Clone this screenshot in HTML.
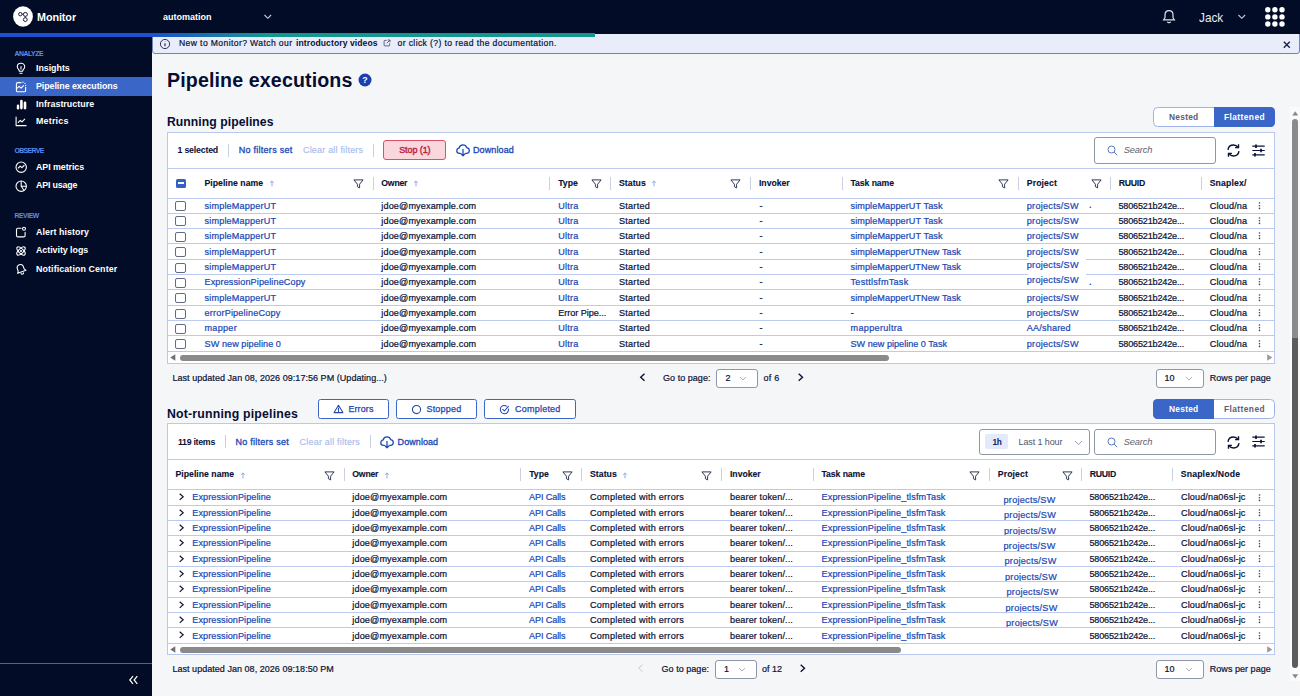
<!DOCTYPE html>
<html lang="en"><head><meta charset="utf-8"><title>Monitor - Pipeline executions</title>
<style>
*{box-sizing:border-box;margin:0;padding:0}
html,body{width:1300px;height:696px;overflow:hidden;background:#f5f6f8;font-family:"Liberation Sans",sans-serif;color:#0b1236}
.abs{position:absolute}
svg{overflow:visible}
.t{position:absolute;white-space:pre;line-height:1}
.panel{position:absolute;left:167px;width:1108px;background:#fff;border:1px solid #b9c8ef}
.ln{position:absolute;left:168px;width:1106px;height:1px;background:#bccaef}
.sep{position:absolute;width:1px;height:13px;background:#c9d0e4}
.cb{position:absolute;width:11px;height:10px;border:1.3px solid #636b82;border-radius:2px;background:#fff}
.btn{position:absolute;border:1px solid #3a66c8;border-radius:2.5px;background:#fff;height:19.5px}
.sel{position:absolute;border:1px solid #8f96aa;border-radius:3px;background:#fff}
</style></head>
<body>
<div class="abs" style="left:0;top:0;width:1300px;height:33.5px;background:#020c26"></div>
<div class="abs" style="left:0;top:33px;width:152px;height:663px;background:#020c26"></div>
<div class="abs" style="left:152px;top:31px;width:1147.5px;height:22.5px;background:#e8edf9;border:1px solid #6f83bd;border-radius:3px"></div>
<div class="abs" style="left:152px;top:30px;width:1148px;height:3.5px;background:#020c26"></div>
<div class="abs" style="left:0;top:33px;width:595px;height:3.6px;background:linear-gradient(90deg,#1b50d0 0,#1b50d0 155px,#12988f 265px,#12988f 595px)"></div>
<svg class="abs" style="left:12.5px;top:6px" width="20" height="21" viewBox="0 0 20 21"><ellipse cx="10" cy="10.5" rx="9.9" ry="10.3" fill="#fff"/><g fill="none" stroke="#1b2038" stroke-width="1"><circle cx="7.3" cy="8.2" r="1.7"/><circle cx="12.4" cy="8.4" r="2"/><circle cx="12.3" cy="13.6" r="1.9"/><path d="M9 8.200h1.400M12.400 10.400v1.300"/></g></svg>
<div class="t" id="f1" style="left:37px;top:11.5px;font-size:10.8px;font-weight:700;color:#fff;letter-spacing:-0.083px;">Monitor</div>
<div class="t" id="f2" style="left:163px;top:12.6px;font-size:9px;font-weight:700;color:#fff;letter-spacing:0.000px;">automation</div>
<svg class="abs" style="left:263px;top:14px" width="10" height="6" viewBox="0 0 10 6"><path d="M1.500 1l3.300 3.300L8.100 1" fill="none" stroke="#c9cede" stroke-width="1.1"/></svg>
<svg class="abs" style="left:1161.5px;top:8.700px" width="14" height="16" viewBox="0 0 14 16"><path d="M7 1.600c-2.5 0-4 1.9-4 4.300v2.800l-1.4 2.200h10.800l-1.4-2.200V5.900c0-2.4-1.5-4.3-4-4.300z" fill="none" stroke="#dfe2ec" stroke-width="1.2"/><path d="M5.400 12.700c.3.7.8 1 1.6 1s1.300-.3 1.6-1" fill="none" stroke="#dfe2ec" stroke-width="1.2"/></svg>
<div class="t" style="left:1199.4px;top:12.3px;font-size:12.8px;font-weight:400;color:#eceef4;transform:scaleX(.92);transform-origin:0 0">Jack</div>
<svg class="abs" style="left:1237px;top:14px" width="10" height="6" viewBox="0 0 10 6"><path d="M1.500 1l3.300 3.300L8.100 1" fill="none" stroke="#c9cede" stroke-width="1.1"/></svg>
<svg class="abs" style="left:1264.9px;top:6.600px" width="20" height="20" viewBox="0 0 20 20" fill="#fff"><circle cx="2.8" cy="2.8" r="2.7"/><circle cx="9.9" cy="2.8" r="2.7"/><circle cx="17" cy="2.8" r="2.7"/><circle cx="2.8" cy="9.9" r="2.7"/><circle cx="9.9" cy="9.9" r="2.7"/><circle cx="17" cy="9.9" r="2.7"/><circle cx="2.8" cy="17" r="2.7"/><circle cx="9.9" cy="17" r="2.7"/><circle cx="17" cy="17" r="2.7"/></svg>
<div class="t" id="f3" style="left:14.5px;top:50.5px;font-size:6.9px;font-weight:700;color:#5a8cf0;letter-spacing:-0.487px;">ANALYZE</div>
<div class="abs" style="left:0;top:77px;width:152px;height:18.5px;background:#3a66c8"></div>
<div class="t" id="f4" style="left:36px;top:64.3px;font-size:8.9px;font-weight:700;color:#fff;letter-spacing:-0.041px;">Insights</div>
<div class="t" id="f5" style="left:36px;top:82.1px;font-size:8.9px;font-weight:700;color:#fff;letter-spacing:-0.067px;">Pipeline executions</div>
<div class="t" id="f6" style="left:36px;top:99.89999999999999px;font-size:8.9px;font-weight:700;color:#fff;letter-spacing:0.035px;">Infrastructure</div>
<div class="t" id="f7" style="left:36px;top:117.0px;font-size:8.9px;font-weight:700;color:#fff;letter-spacing:0.217px;">Metrics</div>
<div class="t" id="f8" style="left:36px;top:163.0px;font-size:8.9px;font-weight:700;color:#fff;letter-spacing:-0.068px;">API metrics</div>
<div class="t" id="f9" style="left:36px;top:181.4px;font-size:8.9px;font-weight:700;color:#fff;letter-spacing:-0.169px;">API usage</div>
<div class="t" id="f10" style="left:36px;top:228.0px;font-size:8.9px;font-weight:700;color:#fff;letter-spacing:0.055px;">Alert history</div>
<div class="t" id="f11" style="left:36px;top:246.4px;font-size:8.9px;font-weight:700;color:#fff;letter-spacing:-0.045px;">Activity logs</div>
<div class="t" id="f12" style="left:36px;top:264.5px;font-size:8.9px;font-weight:700;color:#fff;letter-spacing:0.100px;">Notification Center</div>
<div class="t" id="f13" style="left:14.5px;top:148px;font-size:6.9px;font-weight:700;color:#5a8cf0;letter-spacing:-0.625px;">OBSERVE</div>
<div class="t" id="f14" style="left:14.5px;top:213.2px;font-size:6.9px;font-weight:700;color:#5a8cf0;letter-spacing:-0.481px;">REVIEW</div>
<svg class="abs" style="left:15.2px;top:62.2px" width="12" height="13" viewBox="0 0 12 13" fill="none" stroke="#fff" stroke-width="1.1" stroke-linecap="round" stroke-linejoin="round"><path d="M6 1.300c-2.2 0-3.7 1.6-3.7 3.5 0 1.3.7 2.1 1.4 2.9.4.5.7 1 .7 1.600h3.200c0-.6.3-1.1.7-1.6.7-.8 1.4-1.6 1.4-2.9 0-1.9-1.5-3.5-3.7-3.500z"/><path d="M4.900 11.300h2.200M6 4.500v2.600"/></svg>
<svg class="abs" style="left:14.8px;top:80.5px" width="12" height="12" viewBox="0 0 12 12" fill="none" stroke="#fff" stroke-width="1.1" stroke-linecap="round" stroke-linejoin="round"><path d="M6 1.600H2.800c-.8 0-1.4.6-1.4 1.400v6.400c0 .8.6 1.4 1.4 1.400h6.400c.8 0 1.4-.6 1.4-1.400V6.200"/><path d="M1.700 7.600l2.400-2.2 2 1.7 2.4-2.4"/><path d="M8 1.200v.1M10 2.300v.1M10.700 4.300v.1" stroke-width="1.2"/></svg>
<svg class="abs" style="left:15.8px;top:98.5px" width="12" height="11" viewBox="0 0 12 11" fill="#fff"><rect x="0.8" y="5.6" width="2.4" height="4.8" rx="1.2"/><rect x="4.1" y="0.8" width="2.6" height="9.6" rx="1.3"/><rect x="7.7" y="2.6" width="2.6" height="7.8" rx="1.3"/></svg>
<svg class="abs" style="left:15.1px;top:116px" width="12" height="11" viewBox="0 0 12 11" fill="none" stroke="#fff" stroke-width="1.1" stroke-linecap="round" stroke-linejoin="round"><path d="M1.100 1v8.600h10"/><path d="M3.300 6.400l2-2.1 1.7 1.5 2.7-2.6"/></svg>
<svg class="abs" style="left:15px;top:161.2px" width="13" height="13" viewBox="0 0 13 13" fill="none" stroke="#fff" stroke-width="1.1" stroke-linecap="round" stroke-linejoin="round"><circle cx="6.2" cy="6.2" r="5.2"/><path d="M3.300 7l1.900-1.9 1.7 1.5 2.2-2.1"/></svg>
<svg class="abs" style="left:15px;top:179.5px" width="13" height="13" viewBox="0 0 13 13" fill="none" stroke="#fff" stroke-width="1.1" stroke-linecap="round" stroke-linejoin="round"><circle cx="6.2" cy="6.2" r="5.2"/><path d="M6.200 1.300v4.900h4.900M6.200 6.200l2.700 4"/></svg>
<svg class="abs" style="left:14.7px;top:225.6px" width="12" height="12" viewBox="0 0 12 12" fill="none" stroke="#fff" stroke-width="1.1" stroke-linecap="round" stroke-linejoin="round"><path d="M6 2.300H2.900c-.8 0-1.4.6-1.4 1.400v5.800c0 .8.6 1.4 1.4 1.400h5.800c.8 0 1.4-.6 1.4-1.400V6.400"/><circle cx="9" cy="2.7" r="1.5"/></svg>
<svg class="abs" style="left:14.6px;top:244.8px" width="12" height="12" viewBox="0 0 12 12" fill="none" stroke="#fff" stroke-width="1.1" stroke-linecap="round" stroke-linejoin="round"><ellipse cx="6" cy="6" rx="5.3" ry="2.4" transform="rotate(45 6 6)"/><ellipse cx="6" cy="6" rx="5.3" ry="2.4" transform="rotate(-45 6 6)"/><circle cx="6" cy="6" r=".5" fill="#fff"/></svg>
<svg class="abs" style="left:14.7px;top:262.8px" width="12" height="13" viewBox="0 0 12 13" fill="none" stroke="#fff" stroke-width="1.1" stroke-linecap="round" stroke-linejoin="round"><g transform="rotate(-20 6 6.5)"><path d="M6 1.400c-2 0-3.2 1.4-3.2 3.200v2.400L1.600 9h8.800L9.200 7V4.600C9.200 2.8 8 1.4 6 1.400z"/><path d="M4.700 10.400c.2.7.7 1 1.3 1s1.100-.3 1.3-1"/></g></svg>
<div class="abs" style="left:0;top:663px;width:152px;height:1px;background:#5b6382"></div>
<svg class="abs" style="left:128px;top:675px" width="11" height="10" viewBox="0 0 11 10" ><path d="M5 1.200L1.800 5 5 8.800M9.300 1.200L6.100 5l3.200 3.8" fill="none" stroke="#fff" stroke-width="1.2"/></svg>
<svg class="abs" style="left:158.6px;top:38.4px" width="12" height="12" viewBox="0 0 12 12" ><circle cx="6" cy="6" r="4.6" fill="none" stroke="#1b2342" stroke-width=".9"/><path d="M6 5.300v3M6 3.500v.3" stroke="#1b2342" stroke-width="1.1"/></svg>
<div class="t" id="f15" style="left:179px;top:38.8px;font-size:8.6px;font-weight:400;color:#0b1236;-webkit-text-stroke:0.2px #0b1236;letter-spacing:0.384px;">New to Monitor? Watch our</div>
<div class="t" id="f16" style="left:296px;top:38.8px;font-size:8.6px;font-weight:700;color:#0b1236;letter-spacing:0.073px;">introductory videos</div>
<svg class="abs" style="left:383px;top:39.4px" width="8" height="8" viewBox="0 0 8 8" ><path d="M3.600 1.400H1.900c-.5 0-.8.3-.8.8v3.900c0 .5.3.8.8.8h3.900c.5 0 .8-.3.8-.8V4.400M4.700 1h2.300v2.300M6.800 1.200L3.800 4.2" fill="none" stroke="#3a4260" stroke-width=".8"/></svg>
<div class="t" id="f17" style="left:397.5px;top:38.8px;font-size:8.6px;font-weight:400;color:#0b1236;-webkit-text-stroke:0.2px #0b1236;letter-spacing:0.383px;">or click (?) to read the documentation.</div>
<svg class="abs" style="left:1283.2px;top:40.7px" width="8" height="8" viewBox="0 0 8 8" ><path d="M.8 .8l6 6M6.800 .8l-6 6" stroke="#141c48" stroke-width="1.3"/></svg>
<div class="t" id="f18" style="left:167px;top:70.7px;font-size:19.6px;font-weight:700;color:#060d33;letter-spacing:0.135px;">Pipeline executions</div>
<svg class="abs" style="left:358.3px;top:73.3px" width="14" height="14" viewBox="0 0 14 14"><circle cx="7" cy="7" r="6.5" fill="#1c3fae"/><text x="7" y="10.1" text-anchor="middle" font-family="Liberation Sans,sans-serif" font-weight="700" font-size="8.8" fill="#fff">?</text></svg>
<div class="t" id="f19" style="left:167px;top:116.3px;font-size:12.2px;font-weight:700;color:#060d33;letter-spacing:0.051px;">Running pipelines</div>
<div class="t" id="f20" style="left:167px;top:407.8px;font-size:12.3px;font-weight:700;color:#060d33;letter-spacing:0.188px;">Not-running pipelines</div>
<div class="panel" style="top:132px;height:231.5px"></div>
<div class="abs" style="left:1153px;top:107px;width:122px;height:19.5px;border:1px solid #9db3ea;border-radius:4.500px;background:#fff"></div>
<div class="abs" style="left:1213.5px;top:107px;width:61.500px;height:19.5px;border-radius:0 4.500px 4.500px 0;background:#3a66c8"></div>
<div class="t" id="f21" style="left:1169px;top:112.7px;font-size:8.4px;font-weight:700;color:#5a6072;letter-spacing:0.260px;">Nested</div>
<div class="t" id="f22" style="left:1224px;top:112.7px;font-size:8.4px;font-weight:700;color:#fff;letter-spacing:0.418px;">Flattened</div>
<div class="t" id="f23" style="left:177.5px;top:146.2px;font-size:8.8px;font-weight:700;color:#0b1236;letter-spacing:-0.205px;">1 selected</div>
<div class="sep" style="left:227.7px;top:143.7px"></div>
<div class="t" id="f24" style="left:238.7px;top:146.2px;font-size:9px;font-weight:400;color:#1a47b5;-webkit-text-stroke:0.3px #1a47b5;letter-spacing:0.270px;">No filters set</div>
<div class="t" id="f25" style="left:303px;top:146.2px;font-size:9px;font-weight:400;color:#a9bcec;-webkit-text-stroke:0.15px #a9bcec;letter-spacing:0.187px;">Clear all filters</div>
<div class="sep" style="left:372.7px;top:143.7px"></div>
<div class="abs" style="left:383px;top:140px;width:63px;height:20px;background:#f9d7dd;border:1.300px solid #d9506a;border-radius:3px"></div>
<div class="t" id="f26" style="left:399.2px;top:146.2px;font-size:9px;font-weight:400;color:#bb1f40;-webkit-text-stroke:0.4px #bb1f40;letter-spacing:-0.089px;">Stop (1)</div>
<svg class="abs" style="left:456.2px;top:144px" width="14" height="13" viewBox="0 0 14 13" ><path d="M4.300 9.300H3.500C2 9.3.8 8.2.8 6.700c0-1.4 1-2.5 2.3-2.700C3.500 2.2 5 .9 6.9.9c1.800 0 3.3 1.1 3.8 2.7 1.5.2 2.6 1.4 2.6 2.9 0 1.6-1.3 2.8-2.8 2.800h-.8" fill="none" stroke="#1a47b5" stroke-width="1.25" stroke-linecap="round"/><path d="M7 5.400v6.200M4.800 9.600L7 11.800l2.200-2.2" fill="none" stroke="#1a47b5" stroke-width="1.25" stroke-linecap="round" stroke-linejoin="round"/></svg>
<div class="t" id="f27" style="left:473px;top:146.2px;font-size:9px;font-weight:400;color:#1a47b5;-webkit-text-stroke:0.3px #1a47b5;letter-spacing:0.121px;">Download</div>
<div class="sel" style="left:1094px;top:137.2px;width:122px;height:26.5px;border-width:1.2px"></div>
<svg class="abs" style="left:1107px;top:145.2px" width="11" height="11" viewBox="0 0 11 11" ><circle cx="4.5" cy="4.5" r="3.5" fill="none" stroke="#5877b8" stroke-width="1"/><path d="M7 7l3.200 3.2" stroke="#5877b8" stroke-width="1"/></svg>
<div class="t" id="f28" style="left:1123.8px;top:146.0px;font-size:9.3px;font-weight:400;color:#5d6377;letter-spacing:-0.178px;font-style:italic">Search</div>
<svg class="abs" style="left:1226px;top:143px" width="15" height="15" viewBox="0 0 15 15" ><g fill="none" stroke="#0b1236" stroke-width="1.4"><path d="M2 6.800C2.400 4 4.7 2 7.5 2c1.900 0 3.5.9 4.5 2.300M13 8.200C12.600 11 10.3 13 7.5 13c-1.9 0-3.5-.9-4.5-2.3"/><path d="M12.500 1.200v3.400H9.100M2.500 13.800v-3.400h3.400"/></g></svg>
<svg class="abs" style="left:1251.5px;top:143.7px" width="13" height="13" viewBox="0 0 13 13" ><g fill="none" stroke="#0b1236" stroke-width="1.2"><path d="M.3 2.200h12.400M.3 6.500h12.400M.3 10.800h12.400"/><path d="M4 .4v3.600M9 4.700v3.600M3 9v3.600" stroke-width="1.7"/></g></svg>
<div class="ln" style="top:168px"></div>
<div class="ln" style="top:197.5px"></div>
<div class="abs" style="left:176px;top:178.5px;width:9.5px;height:9.2px;background:#3560c6;border-radius:1.5px"></div>
<div class="abs" style="left:178px;top:182.39999999999998px;width:5.5px;height:1.5px;background:#fff"></div>
<div class="t" id="f29" style="left:204.5px;top:178.7px;font-size:8.7px;font-weight:700;color:#0b1236;-webkit-text-stroke:0.12px #0b1236;letter-spacing:0.014px;">Pipeline name</div>
<svg class="abs" style="left:353.0px;top:179.0px" width="11" height="10" viewBox="0 0 11 10" ><path d="M.9 .9h9.200L6.600 5.200v3.700L4.400 7.700V5.200z" fill="none" stroke="#1b2342" stroke-width=".9" stroke-linejoin="round"/></svg>
<div class="sep" style="left:372.8px;top:176.7px"></div>
<div class="t" id="f30" style="left:381.3px;top:178.7px;font-size:8.7px;font-weight:700;color:#0b1236;-webkit-text-stroke:0.12px #0b1236;letter-spacing:-0.209px;">Owner</div>
<div class="sep" style="left:549.1999999999999px;top:176.7px"></div>
<div class="t" id="f31" style="left:558.2px;top:178.7px;font-size:8.7px;font-weight:700;color:#0b1236;-webkit-text-stroke:0.12px #0b1236;letter-spacing:0.015px;">Type</div>
<svg class="abs" style="left:590.6px;top:179.0px" width="11" height="10" viewBox="0 0 11 10" ><path d="M.9 .9h9.200L6.600 5.200v3.700L4.400 7.700V5.200z" fill="none" stroke="#1b2342" stroke-width=".9" stroke-linejoin="round"/></svg>
<div class="sep" style="left:610.0999999999999px;top:176.7px"></div>
<div class="t" id="f32" style="left:619px;top:178.7px;font-size:8.7px;font-weight:700;color:#0b1236;-webkit-text-stroke:0.12px #0b1236;letter-spacing:0.040px;">Status</div>
<svg class="abs" style="left:730.2px;top:179.0px" width="11" height="10" viewBox="0 0 11 10" ><path d="M.9 .9h9.200L6.600 5.200v3.700L4.400 7.700V5.200z" fill="none" stroke="#1b2342" stroke-width=".9" stroke-linejoin="round"/></svg>
<div class="sep" style="left:750.0px;top:176.7px"></div>
<div class="t" id="f33" style="left:759px;top:178.7px;font-size:8.7px;font-weight:700;color:#0b1236;-webkit-text-stroke:0.12px #0b1236;letter-spacing:-0.044px;">Invoker</div>
<div class="sep" style="left:841.5px;top:176.7px"></div>
<div class="t" id="f34" style="left:850.5px;top:178.7px;font-size:8.7px;font-weight:700;color:#0b1236;-webkit-text-stroke:0.12px #0b1236;letter-spacing:-0.085px;">Task name</div>
<svg class="abs" style="left:998.4px;top:179.0px" width="11" height="10" viewBox="0 0 11 10" ><path d="M.9 .9h9.200L6.600 5.200v3.700L4.400 7.700V5.200z" fill="none" stroke="#1b2342" stroke-width=".9" stroke-linejoin="round"/></svg>
<div class="sep" style="left:1018.4px;top:176.7px"></div>
<div class="t" id="f35" style="left:1026.8px;top:178.7px;font-size:8.7px;font-weight:700;color:#0b1236;-webkit-text-stroke:0.12px #0b1236;letter-spacing:0.092px;">Project</div>
<svg class="abs" style="left:1090.5px;top:179.0px" width="11" height="10" viewBox="0 0 11 10" ><path d="M.9 .9h9.200L6.600 5.200v3.700L4.400 7.700V5.200z" fill="none" stroke="#1b2342" stroke-width=".9" stroke-linejoin="round"/></svg>
<div class="sep" style="left:1109.7px;top:176.7px"></div>
<div class="t" id="f36" style="left:1118.7px;top:178.7px;font-size:8.7px;font-weight:700;color:#0b1236;-webkit-text-stroke:0.12px #0b1236;letter-spacing:-0.243px;">RUUID</div>
<div class="sep" style="left:1201.3px;top:176.7px"></div>
<div class="t" id="f37" style="left:1209.7px;top:178.7px;font-size:8.7px;font-weight:700;color:#0b1236;-webkit-text-stroke:0.12px #0b1236;letter-spacing:0.133px;">Snaplex/</div>
<svg class="abs" style="left:268.5px;top:180px" width="6" height="7" viewBox="0 0 6 7" ><path d="M3 6.300V1M1.200 2.700L3 .9l1.800 1.8" fill="none" stroke="#8ea7e6" stroke-width="1"/></svg>
<svg class="abs" style="left:412.5px;top:180px" width="6" height="7" viewBox="0 0 6 7" ><path d="M3 6.300V1M1.200 2.700L3 .9l1.800 1.8" fill="none" stroke="#8ea7e6" stroke-width="1"/></svg>
<svg class="abs" style="left:651px;top:180px" width="6" height="7" viewBox="0 0 6 7" ><path d="M3 6.300V1M1.200 2.700L3 .9l1.800 1.8" fill="none" stroke="#8ea7e6" stroke-width="1"/></svg>
<div class="cb" style="left:175.3px;top:201.10px"></div>
<div class="t" id="f38" style="left:204.5px;top:201.5px;font-size:9.1px;font-weight:400;color:#1a47b5;-webkit-text-stroke:0.22px #1a47b5;letter-spacing:0.169px;">simpleMapperUT</div>
<div class="t" id="f39" style="left:381.3px;top:201.5px;font-size:9.1px;font-weight:400;color:#0b1236;-webkit-text-stroke:0.22px #0b1236;letter-spacing:0.132px;">jdoe@myexample.com</div>
<div class="t" id="f40" style="left:558.2px;top:201.5px;font-size:9.1px;font-weight:400;color:#1a47b5;-webkit-text-stroke:0.22px #1a47b5;letter-spacing:0.219px;">Ultra</div>
<div class="t" id="f41" style="left:619px;top:201.5px;font-size:9.1px;font-weight:400;color:#0b1236;-webkit-text-stroke:0.22px #0b1236;letter-spacing:0.239px;">Started</div>
<div class="t" style="left:759.5px;top:201.5px;font-size:9.1px;font-weight:400;color:#0b1236;-webkit-text-stroke:0.22px #0b1236;">-</div>
<div class="t" id="f42" style="left:850.5px;top:201.5px;font-size:9.1px;font-weight:400;color:#1a47b5;-webkit-text-stroke:0.22px #1a47b5;letter-spacing:0.103px;">simpleMapperUT Task</div>
<div class="t" id="f43" style="left:1026.8px;top:201.5px;font-size:9.1px;font-weight:400;color:#1a47b5;-webkit-text-stroke:0.22px #1a47b5;letter-spacing:0.270px;">projects/SW</div>
<div class="t" id="f44" style="left:1118.5px;top:201.5px;font-size:9.1px;font-weight:400;color:#0b1236;-webkit-text-stroke:0.22px #0b1236;letter-spacing:-0.185px;">5806521b242e...</div>
<div class="t" id="f45" style="left:1209.7px;top:201.5px;font-size:9.1px;font-weight:400;color:#0b1236;-webkit-text-stroke:0.22px #0b1236;letter-spacing:0.137px;">Cloud/na</div>
<svg class="abs" style="left:1257.8px;top:201.5px" width="3" height="9" viewBox="0 0 3 9" ><g fill="#3a4160"><circle cx="1.5" cy="1" r=".8"/><circle cx="1.5" cy="3.7" r=".8"/><circle cx="1.5" cy="6.4" r=".8"/></g></svg>
<div class="ln" style="top:212.56px"></div>
<div class="cb" style="left:175.3px;top:216.46px"></div>
<div class="t" id="f46" style="left:204.5px;top:216.86px;font-size:9.1px;font-weight:400;color:#1a47b5;-webkit-text-stroke:0.22px #1a47b5;letter-spacing:0.169px;">simpleMapperUT</div>
<div class="t" id="f47" style="left:381.3px;top:216.86px;font-size:9.1px;font-weight:400;color:#0b1236;-webkit-text-stroke:0.22px #0b1236;letter-spacing:0.132px;">jdoe@myexample.com</div>
<div class="t" id="f48" style="left:558.2px;top:216.86px;font-size:9.1px;font-weight:400;color:#1a47b5;-webkit-text-stroke:0.22px #1a47b5;letter-spacing:0.219px;">Ultra</div>
<div class="t" id="f49" style="left:619px;top:216.86px;font-size:9.1px;font-weight:400;color:#0b1236;-webkit-text-stroke:0.22px #0b1236;letter-spacing:0.239px;">Started</div>
<div class="t" style="left:759.5px;top:216.86px;font-size:9.1px;font-weight:400;color:#0b1236;-webkit-text-stroke:0.22px #0b1236;">-</div>
<div class="t" id="f50" style="left:850.5px;top:216.86px;font-size:9.1px;font-weight:400;color:#1a47b5;-webkit-text-stroke:0.22px #1a47b5;letter-spacing:0.103px;">simpleMapperUT Task</div>
<div class="t" id="f51" style="left:1026.8px;top:216.86px;font-size:9.1px;font-weight:400;color:#1a47b5;-webkit-text-stroke:0.22px #1a47b5;letter-spacing:0.270px;">projects/SW</div>
<div class="t" id="f52" style="left:1118.5px;top:216.86px;font-size:9.1px;font-weight:400;color:#0b1236;-webkit-text-stroke:0.22px #0b1236;letter-spacing:-0.185px;">5806521b242e...</div>
<div class="t" id="f53" style="left:1209.7px;top:216.86px;font-size:9.1px;font-weight:400;color:#0b1236;-webkit-text-stroke:0.22px #0b1236;letter-spacing:0.137px;">Cloud/na</div>
<svg class="abs" style="left:1257.8px;top:216.86px" width="3" height="9" viewBox="0 0 3 9" ><g fill="#3a4160"><circle cx="1.5" cy="1" r=".8"/><circle cx="1.5" cy="3.7" r=".8"/><circle cx="1.5" cy="6.4" r=".8"/></g></svg>
<div class="ln" style="top:227.92px"></div>
<div class="cb" style="left:175.3px;top:231.82px"></div>
<div class="t" id="f54" style="left:204.5px;top:232.22px;font-size:9.1px;font-weight:400;color:#1a47b5;-webkit-text-stroke:0.22px #1a47b5;letter-spacing:0.169px;">simpleMapperUT</div>
<div class="t" id="f55" style="left:381.3px;top:232.22px;font-size:9.1px;font-weight:400;color:#0b1236;-webkit-text-stroke:0.22px #0b1236;letter-spacing:0.132px;">jdoe@myexample.com</div>
<div class="t" id="f56" style="left:558.2px;top:232.22px;font-size:9.1px;font-weight:400;color:#1a47b5;-webkit-text-stroke:0.22px #1a47b5;letter-spacing:0.219px;">Ultra</div>
<div class="t" id="f57" style="left:619px;top:232.22px;font-size:9.1px;font-weight:400;color:#0b1236;-webkit-text-stroke:0.22px #0b1236;letter-spacing:0.239px;">Started</div>
<div class="t" style="left:759.5px;top:232.22px;font-size:9.1px;font-weight:400;color:#0b1236;-webkit-text-stroke:0.22px #0b1236;">-</div>
<div class="t" id="f58" style="left:850.5px;top:232.22px;font-size:9.1px;font-weight:400;color:#1a47b5;-webkit-text-stroke:0.22px #1a47b5;letter-spacing:0.103px;">simpleMapperUT Task</div>
<div class="t" id="f59" style="left:1026.8px;top:232.22px;font-size:9.1px;font-weight:400;color:#1a47b5;-webkit-text-stroke:0.22px #1a47b5;letter-spacing:0.270px;">projects/SW</div>
<div class="t" id="f60" style="left:1118.5px;top:232.22px;font-size:9.1px;font-weight:400;color:#0b1236;-webkit-text-stroke:0.22px #0b1236;letter-spacing:-0.185px;">5806521b242e...</div>
<div class="t" id="f61" style="left:1209.7px;top:232.22px;font-size:9.1px;font-weight:400;color:#0b1236;-webkit-text-stroke:0.22px #0b1236;letter-spacing:0.137px;">Cloud/na</div>
<svg class="abs" style="left:1257.8px;top:232.22px" width="3" height="9" viewBox="0 0 3 9" ><g fill="#3a4160"><circle cx="1.5" cy="1" r=".8"/><circle cx="1.5" cy="3.7" r=".8"/><circle cx="1.5" cy="6.4" r=".8"/></g></svg>
<div class="ln" style="top:243.28px"></div>
<div class="cb" style="left:175.3px;top:247.18px"></div>
<div class="t" id="f62" style="left:204.5px;top:247.58px;font-size:9.1px;font-weight:400;color:#1a47b5;-webkit-text-stroke:0.22px #1a47b5;letter-spacing:0.169px;">simpleMapperUT</div>
<div class="t" id="f63" style="left:381.3px;top:247.58px;font-size:9.1px;font-weight:400;color:#0b1236;-webkit-text-stroke:0.22px #0b1236;letter-spacing:0.132px;">jdoe@myexample.com</div>
<div class="t" id="f64" style="left:558.2px;top:247.58px;font-size:9.1px;font-weight:400;color:#1a47b5;-webkit-text-stroke:0.22px #1a47b5;letter-spacing:0.219px;">Ultra</div>
<div class="t" id="f65" style="left:619px;top:247.58px;font-size:9.1px;font-weight:400;color:#0b1236;-webkit-text-stroke:0.22px #0b1236;letter-spacing:0.239px;">Started</div>
<div class="t" style="left:759.5px;top:247.58px;font-size:9.1px;font-weight:400;color:#0b1236;-webkit-text-stroke:0.22px #0b1236;">-</div>
<div class="t" id="f66" style="left:850.5px;top:247.58px;font-size:9.1px;font-weight:400;color:#1a47b5;-webkit-text-stroke:0.22px #1a47b5;letter-spacing:0.091px;">simpleMapperUTNew Task</div>
<div class="t" id="f67" style="left:1026.8px;top:248.28px;font-size:9.1px;font-weight:400;color:#1a47b5;-webkit-text-stroke:0.22px #1a47b5;letter-spacing:0.270px;">projects/SW</div>
<div class="t" id="f68" style="left:1118.5px;top:247.58px;font-size:9.1px;font-weight:400;color:#0b1236;-webkit-text-stroke:0.22px #0b1236;letter-spacing:-0.185px;">5806521b242e...</div>
<div class="t" id="f69" style="left:1209.7px;top:247.58px;font-size:9.1px;font-weight:400;color:#0b1236;-webkit-text-stroke:0.22px #0b1236;letter-spacing:0.137px;">Cloud/na</div>
<svg class="abs" style="left:1257.8px;top:247.58px" width="3" height="9" viewBox="0 0 3 9" ><g fill="#3a4160"><circle cx="1.5" cy="1" r=".8"/><circle cx="1.5" cy="3.7" r=".8"/><circle cx="1.5" cy="6.4" r=".8"/></g></svg>
<div class="ln" style="top:258.64px"></div>
<div class="cb" style="left:175.3px;top:262.54px"></div>
<div class="t" id="f70" style="left:204.5px;top:262.94px;font-size:9.1px;font-weight:400;color:#1a47b5;-webkit-text-stroke:0.22px #1a47b5;letter-spacing:0.169px;">simpleMapperUT</div>
<div class="t" id="f71" style="left:381.3px;top:262.94px;font-size:9.1px;font-weight:400;color:#0b1236;-webkit-text-stroke:0.22px #0b1236;letter-spacing:0.132px;">jdoe@myexample.com</div>
<div class="t" id="f72" style="left:558.2px;top:262.94px;font-size:9.1px;font-weight:400;color:#1a47b5;-webkit-text-stroke:0.22px #1a47b5;letter-spacing:0.219px;">Ultra</div>
<div class="t" id="f73" style="left:619px;top:262.94px;font-size:9.1px;font-weight:400;color:#0b1236;-webkit-text-stroke:0.22px #0b1236;letter-spacing:0.239px;">Started</div>
<div class="t" style="left:759.5px;top:262.94px;font-size:9.1px;font-weight:400;color:#0b1236;-webkit-text-stroke:0.22px #0b1236;">-</div>
<div class="t" id="f74" style="left:850.5px;top:262.94px;font-size:9.1px;font-weight:400;color:#1a47b5;-webkit-text-stroke:0.22px #1a47b5;letter-spacing:0.091px;">simpleMapperUTNew Task</div>
<div class="t" id="f75" style="left:1026.8px;top:261.44px;font-size:9.1px;font-weight:400;color:#1a47b5;-webkit-text-stroke:0.22px #1a47b5;letter-spacing:0.270px;">projects/SW</div>
<div class="t" id="f76" style="left:1118.5px;top:262.94px;font-size:9.1px;font-weight:400;color:#0b1236;-webkit-text-stroke:0.22px #0b1236;letter-spacing:-0.185px;">5806521b242e...</div>
<div class="t" id="f77" style="left:1209.7px;top:262.94px;font-size:9.1px;font-weight:400;color:#0b1236;-webkit-text-stroke:0.22px #0b1236;letter-spacing:0.137px;">Cloud/na</div>
<svg class="abs" style="left:1257.8px;top:262.94px" width="3" height="9" viewBox="0 0 3 9" ><g fill="#3a4160"><circle cx="1.5" cy="1" r=".8"/><circle cx="1.5" cy="3.7" r=".8"/><circle cx="1.5" cy="6.4" r=".8"/></g></svg>
<div class="ln" style="top:274.00px"></div>
<div class="cb" style="left:175.3px;top:277.90px"></div>
<div class="t" id="f78" style="left:204.5px;top:278.3px;font-size:9.1px;font-weight:400;color:#1a47b5;-webkit-text-stroke:0.22px #1a47b5;letter-spacing:0.110px;">ExpressionPipelineCopy</div>
<div class="t" id="f79" style="left:381.3px;top:278.3px;font-size:9.1px;font-weight:400;color:#0b1236;-webkit-text-stroke:0.22px #0b1236;letter-spacing:0.132px;">jdoe@myexample.com</div>
<div class="t" id="f80" style="left:558.2px;top:278.3px;font-size:9.1px;font-weight:400;color:#1a47b5;-webkit-text-stroke:0.22px #1a47b5;letter-spacing:0.219px;">Ultra</div>
<div class="t" id="f81" style="left:619px;top:278.3px;font-size:9.1px;font-weight:400;color:#0b1236;-webkit-text-stroke:0.22px #0b1236;letter-spacing:0.239px;">Started</div>
<div class="t" style="left:759.5px;top:278.3px;font-size:9.1px;font-weight:400;color:#0b1236;-webkit-text-stroke:0.22px #0b1236;">-</div>
<div class="t" id="f82" style="left:850.5px;top:278.3px;font-size:9.1px;font-weight:400;color:#1a47b5;-webkit-text-stroke:0.22px #1a47b5;letter-spacing:0.263px;">TesttlsfmTask</div>
<div class="t" id="f83" style="left:1026.8px;top:276.0px;font-size:9.1px;font-weight:400;color:#1a47b5;-webkit-text-stroke:0.22px #1a47b5;letter-spacing:0.270px;">projects/SW</div>
<div class="t" id="f84" style="left:1118.5px;top:278.3px;font-size:9.1px;font-weight:400;color:#0b1236;-webkit-text-stroke:0.22px #0b1236;letter-spacing:-0.185px;">5806521b242e...</div>
<div class="t" id="f85" style="left:1209.7px;top:278.3px;font-size:9.1px;font-weight:400;color:#0b1236;-webkit-text-stroke:0.22px #0b1236;letter-spacing:0.137px;">Cloud/na</div>
<svg class="abs" style="left:1257.8px;top:278.3px" width="3" height="9" viewBox="0 0 3 9" ><g fill="#3a4160"><circle cx="1.5" cy="1" r=".8"/><circle cx="1.5" cy="3.7" r=".8"/><circle cx="1.5" cy="6.4" r=".8"/></g></svg>
<div class="ln" style="top:289.36px"></div>
<div class="cb" style="left:175.3px;top:293.26px"></div>
<div class="t" id="f86" style="left:204.5px;top:293.66px;font-size:9.1px;font-weight:400;color:#1a47b5;-webkit-text-stroke:0.22px #1a47b5;letter-spacing:0.169px;">simpleMapperUT</div>
<div class="t" id="f87" style="left:381.3px;top:293.66px;font-size:9.1px;font-weight:400;color:#0b1236;-webkit-text-stroke:0.22px #0b1236;letter-spacing:0.132px;">jdoe@myexample.com</div>
<div class="t" id="f88" style="left:558.2px;top:293.66px;font-size:9.1px;font-weight:400;color:#1a47b5;-webkit-text-stroke:0.22px #1a47b5;letter-spacing:0.219px;">Ultra</div>
<div class="t" id="f89" style="left:619px;top:293.66px;font-size:9.1px;font-weight:400;color:#0b1236;-webkit-text-stroke:0.22px #0b1236;letter-spacing:0.239px;">Started</div>
<div class="t" style="left:759.5px;top:293.66px;font-size:9.1px;font-weight:400;color:#0b1236;-webkit-text-stroke:0.22px #0b1236;">-</div>
<div class="t" id="f90" style="left:850.5px;top:293.66px;font-size:9.1px;font-weight:400;color:#1a47b5;-webkit-text-stroke:0.22px #1a47b5;letter-spacing:0.091px;">simpleMapperUTNew Task</div>
<div class="t" id="f91" style="left:1026.8px;top:294.36px;font-size:9.1px;font-weight:400;color:#1a47b5;-webkit-text-stroke:0.22px #1a47b5;letter-spacing:0.270px;">projects/SW</div>
<div class="t" id="f92" style="left:1118.5px;top:293.66px;font-size:9.1px;font-weight:400;color:#0b1236;-webkit-text-stroke:0.22px #0b1236;letter-spacing:-0.185px;">5806521b242e...</div>
<div class="t" id="f93" style="left:1209.7px;top:293.66px;font-size:9.1px;font-weight:400;color:#0b1236;-webkit-text-stroke:0.22px #0b1236;letter-spacing:0.137px;">Cloud/na</div>
<svg class="abs" style="left:1257.8px;top:293.66px" width="3" height="9" viewBox="0 0 3 9" ><g fill="#3a4160"><circle cx="1.5" cy="1" r=".8"/><circle cx="1.5" cy="3.7" r=".8"/><circle cx="1.5" cy="6.4" r=".8"/></g></svg>
<div class="ln" style="top:304.72px"></div>
<div class="cb" style="left:175.3px;top:308.62px"></div>
<div class="t" id="f94" style="left:204.5px;top:309.02px;font-size:9.1px;font-weight:400;color:#1a47b5;-webkit-text-stroke:0.22px #1a47b5;letter-spacing:0.188px;">errorPipelineCopy</div>
<div class="t" id="f95" style="left:381.3px;top:309.02px;font-size:9.1px;font-weight:400;color:#0b1236;-webkit-text-stroke:0.22px #0b1236;letter-spacing:0.132px;">jdoe@myexample.com</div>
<div class="t" id="f96" style="left:558.2px;top:309.02px;font-size:9.1px;font-weight:400;color:#0b1236;-webkit-text-stroke:0.22px #0b1236;letter-spacing:-0.040px;">Error Pipe...</div>
<div class="t" id="f97" style="left:619px;top:309.02px;font-size:9.1px;font-weight:400;color:#0b1236;-webkit-text-stroke:0.22px #0b1236;letter-spacing:0.239px;">Started</div>
<div class="t" style="left:759.5px;top:309.02px;font-size:9.1px;font-weight:400;color:#0b1236;-webkit-text-stroke:0.22px #0b1236;">-</div>
<div class="t" style="left:850.7px;top:309.02px;font-size:9.1px;font-weight:400;color:#0b1236;-webkit-text-stroke:0.22px #0b1236;">-</div>
<div class="t" id="f98" style="left:1026.8px;top:309.02px;font-size:9.1px;font-weight:400;color:#1a47b5;-webkit-text-stroke:0.22px #1a47b5;letter-spacing:0.270px;">projects/SW</div>
<div class="t" id="f99" style="left:1118.5px;top:309.02px;font-size:9.1px;font-weight:400;color:#0b1236;-webkit-text-stroke:0.22px #0b1236;letter-spacing:-0.185px;">5806521b242e...</div>
<div class="t" id="f100" style="left:1209.7px;top:309.02px;font-size:9.1px;font-weight:400;color:#0b1236;-webkit-text-stroke:0.22px #0b1236;letter-spacing:0.137px;">Cloud/na</div>
<svg class="abs" style="left:1257.8px;top:309.02px" width="3" height="9" viewBox="0 0 3 9" ><g fill="#3a4160"><circle cx="1.5" cy="1" r=".8"/><circle cx="1.5" cy="3.7" r=".8"/><circle cx="1.5" cy="6.4" r=".8"/></g></svg>
<div class="ln" style="top:320.08px"></div>
<div class="cb" style="left:175.3px;top:323.98px"></div>
<div class="t" id="f101" style="left:204.5px;top:324.38px;font-size:9.1px;font-weight:400;color:#1a47b5;-webkit-text-stroke:0.22px #1a47b5;letter-spacing:0.276px;">mapper</div>
<div class="t" id="f102" style="left:381.3px;top:324.38px;font-size:9.1px;font-weight:400;color:#0b1236;-webkit-text-stroke:0.22px #0b1236;letter-spacing:0.132px;">jdoe@myexample.com</div>
<div class="t" id="f103" style="left:558.2px;top:324.38px;font-size:9.1px;font-weight:400;color:#1a47b5;-webkit-text-stroke:0.22px #1a47b5;letter-spacing:0.219px;">Ultra</div>
<div class="t" id="f104" style="left:619px;top:324.38px;font-size:9.1px;font-weight:400;color:#0b1236;-webkit-text-stroke:0.22px #0b1236;letter-spacing:0.239px;">Started</div>
<div class="t" style="left:759.5px;top:324.38px;font-size:9.1px;font-weight:400;color:#0b1236;-webkit-text-stroke:0.22px #0b1236;">-</div>
<div class="t" id="f105" style="left:850.5px;top:324.38px;font-size:9.1px;font-weight:400;color:#1a47b5;-webkit-text-stroke:0.22px #1a47b5;letter-spacing:0.315px;">mapperultra</div>
<div class="t" id="f106" style="left:1026.8px;top:324.38px;font-size:9.1px;font-weight:400;color:#1a47b5;-webkit-text-stroke:0.22px #1a47b5;letter-spacing:0.170px;">AA/shared</div>
<div class="t" id="f107" style="left:1118.5px;top:324.38px;font-size:9.1px;font-weight:400;color:#0b1236;-webkit-text-stroke:0.22px #0b1236;letter-spacing:-0.185px;">5806521b242e...</div>
<div class="t" id="f108" style="left:1209.7px;top:324.38px;font-size:9.1px;font-weight:400;color:#0b1236;-webkit-text-stroke:0.22px #0b1236;letter-spacing:0.137px;">Cloud/na</div>
<svg class="abs" style="left:1257.8px;top:324.38px" width="3" height="9" viewBox="0 0 3 9" ><g fill="#3a4160"><circle cx="1.5" cy="1" r=".8"/><circle cx="1.5" cy="3.7" r=".8"/><circle cx="1.5" cy="6.4" r=".8"/></g></svg>
<div class="ln" style="top:335.44px"></div>
<div class="cb" style="left:175.3px;top:339.34px"></div>
<div class="t" id="f109" style="left:204.5px;top:339.74px;font-size:9.1px;font-weight:400;color:#1a47b5;-webkit-text-stroke:0.22px #1a47b5;letter-spacing:0.069px;">SW new pipeline 0</div>
<div class="t" id="f110" style="left:381.3px;top:339.74px;font-size:9.1px;font-weight:400;color:#0b1236;-webkit-text-stroke:0.22px #0b1236;letter-spacing:0.132px;">jdoe@myexample.com</div>
<div class="t" id="f111" style="left:558.2px;top:339.74px;font-size:9.1px;font-weight:400;color:#1a47b5;-webkit-text-stroke:0.22px #1a47b5;letter-spacing:0.219px;">Ultra</div>
<div class="t" id="f112" style="left:619px;top:339.74px;font-size:9.1px;font-weight:400;color:#0b1236;-webkit-text-stroke:0.22px #0b1236;letter-spacing:0.239px;">Started</div>
<div class="t" style="left:759.5px;top:339.74px;font-size:9.1px;font-weight:400;color:#0b1236;-webkit-text-stroke:0.22px #0b1236;">-</div>
<div class="t" id="f113" style="left:850.5px;top:339.74px;font-size:9.1px;font-weight:400;color:#1a47b5;-webkit-text-stroke:0.22px #1a47b5;letter-spacing:0.005px;">SW new pipeline 0 Task</div>
<div class="t" id="f114" style="left:1026.8px;top:339.74px;font-size:9.1px;font-weight:400;color:#1a47b5;-webkit-text-stroke:0.22px #1a47b5;letter-spacing:0.270px;">projects/SW</div>
<div class="t" id="f115" style="left:1118.5px;top:339.74px;font-size:9.1px;font-weight:400;color:#0b1236;-webkit-text-stroke:0.22px #0b1236;letter-spacing:-0.185px;">5806521b242e...</div>
<div class="t" id="f116" style="left:1209.7px;top:339.74px;font-size:9.1px;font-weight:400;color:#0b1236;-webkit-text-stroke:0.22px #0b1236;letter-spacing:0.137px;">Cloud/na</div>
<svg class="abs" style="left:1257.8px;top:339.74px" width="3" height="9" viewBox="0 0 3 9" ><g fill="#3a4160"><circle cx="1.5" cy="1" r=".8"/><circle cx="1.5" cy="3.7" r=".8"/><circle cx="1.5" cy="6.4" r=".8"/></g></svg>
<div class="abs" style="left:1027.5px;top:258.14px;width:58.5px;height:2px;background:#fff"></div>
<div class="abs" style="left:1027.5px;top:273.50px;width:58.5px;height:2px;background:#fff"></div>
<div class="t" style="left:1089px;top:200.5px;font-size:9px;font-weight:700;color:#1a47b5;">.</div>
<div class="t" style="left:1089px;top:277.5px;font-size:9px;font-weight:700;color:#1a47b5;">.</div>
<div class="ln" style="top:350.80px"></div>
<div class="abs" style="left:180px;top:354.70px;width:709px;height:6px;border-radius:3px;background:#8a8a8a"></div>
<svg class="abs" style="left:170.3px;top:354.2px" width="5.5" height="7" viewBox="0 0 5.5 7" ><path d="M5.300 .2v6.600L.2 3.500z" fill="#707070"/></svg>
<svg class="abs" style="left:1266.8px;top:354.2px" width="5.5" height="7" viewBox="0 0 5.5 7" ><path d="M.2 .2v6.600L5.300 3.500z" fill="#9a9a9a"/></svg>
<div class="t" id="f117" style="left:172.4px;top:373.6px;font-size:9px;font-weight:400;color:#0b1236;-webkit-text-stroke:0.2px #0b1236;letter-spacing:0.046px;">Last updated Jan 08, 2026 09:17:56 PM (Updating...)</div>
<svg class="abs" style="left:639.5px;top:373.3px" width="5.5" height="8.5" viewBox="0 0 5.5 8.5" ><path d="M4.5 .7L.7 4.25 4.5 7.8" fill="none" stroke="#0b1236" stroke-width="1.4"/></svg>
<div class="t" id="f118" style="left:663px;top:373.6px;font-size:9px;font-weight:400;color:#0b1236;-webkit-text-stroke:0.2px #0b1236;letter-spacing:0.041px;">Go to page:</div>
<div class="sel" style="left:716px;top:368.6px;width:42px;height:19px"></div>
<div class="t" style="left:725.5px;top:373.6px;font-size:9px;font-weight:400;color:#0b1236;-webkit-text-stroke:0.2px #0b1236;">2</div>
<svg class="abs" style="left:739px;top:375.90000000000003px" width="8" height="5" viewBox="0 0 8 5" ><path d="M1 1l3 3L7 1" fill="none" stroke="#a0a7bb" stroke-width=".9"/></svg>
<div class="t" id="f119" style="left:763.5px;top:373.6px;font-size:9px;font-weight:400;color:#0b1236;-webkit-text-stroke:0.2px #0b1236;letter-spacing:0.246px;">of 6</div>
<svg class="abs" style="left:798px;top:373.3px" width="5.5" height="8.5" viewBox="0 0 5.5 8.5" ><path d="M.7 .7L4.5 4.25 .7 7.8" fill="none" stroke="#0b1236" stroke-width="1.4"/></svg>
<div class="sel" style="left:1155.5px;top:368.6px;width:48px;height:19px"></div>
<div class="t" style="left:1164.5px;top:373.6px;font-size:9px;font-weight:400;color:#0b1236;-webkit-text-stroke:0.2px #0b1236;">10</div>
<svg class="abs" style="left:1184.5px;top:375.90000000000003px" width="8" height="5" viewBox="0 0 8 5" ><path d="M1 1l3 3L7 1" fill="none" stroke="#a0a7bb" stroke-width=".9"/></svg>
<div class="t" id="f120" style="left:1209.8px;top:373.6px;font-size:9px;font-weight:400;color:#0b1236;-webkit-text-stroke:0.2px #0b1236;letter-spacing:0.035px;">Rows per page</div>
<div class="panel" style="top:423px;height:232px"></div>
<div class="abs" style="left:1153px;top:399px;width:122px;height:19.5px;border:1px solid #9db3ea;border-radius:4.500px;background:#fff"></div>
<div class="abs" style="left:1153px;top:399px;width:60.500px;height:19.5px;border-radius:4.500px 0 0 4.500px;background:#3a66c8"></div>
<div class="t" id="f121" style="left:1169px;top:404.7px;font-size:8.4px;font-weight:700;color:#fff;letter-spacing:0.260px;">Nested</div>
<div class="t" id="f122" style="left:1224px;top:404.7px;font-size:8.4px;font-weight:700;color:#5a6072;letter-spacing:0.418px;">Flattened</div>
<div class="btn" style="left:318px;top:399.2px;width:70.6px"></div>
<div class="t" id="f123" style="left:348.4px;top:405.2px;font-size:9px;font-weight:400;color:#2446ad;-webkit-text-stroke:0.25px #2446ad;letter-spacing:0.117px;">Errors</div>
<svg class="abs" style="left:332.5px;top:404.4px" width="11" height="10" viewBox="0 0 11 10" fill="none" stroke="#2446ad" stroke-width="1.05" stroke-linejoin="round" stroke-linecap="round"><path d="M5.500 1.200L9.900 8.600H1.100z"/><path d="M5.500 4v2.200M5.500 7.300v.2"/></svg>
<div class="btn" style="left:396px;top:399.2px;width:81.4px"></div>
<div class="t" id="f124" style="left:426.4px;top:405.2px;font-size:9px;font-weight:400;color:#2446ad;-webkit-text-stroke:0.25px #2446ad;letter-spacing:0.238px;">Stopped</div>
<svg class="abs" style="left:411.2px;top:403.9px" width="11" height="11" viewBox="0 0 11 11" fill="none" stroke="#2446ad" stroke-width="1.05" stroke-linejoin="round" stroke-linecap="round"><circle cx="5.5" cy="5.5" r="4.1"/></svg>
<div class="btn" style="left:484px;top:399.2px;width:92px"></div>
<div class="t" id="f125" style="left:515px;top:405.2px;font-size:9px;font-weight:400;color:#2446ad;-webkit-text-stroke:0.25px #2446ad;letter-spacing:0.230px;">Completed</div>
<svg class="abs" style="left:499.3px;top:403.9px" width="11" height="11" viewBox="0 0 11 11" fill="none" stroke="#2446ad" stroke-width="1.05" stroke-linejoin="round" stroke-linecap="round"><path d="M9.500 5.100c.2 2.4-1.6 4.6-4.1 4.600a4.100 4.1 0 110-8.200c.8 0 1.5.2 2.1.600"/><path d="M3.700 5.300l1.700 1.7 4-4.6"/></svg>
<div class="t" id="f126" style="left:178px;top:437.5px;font-size:8.8px;font-weight:700;color:#0b1236;letter-spacing:-0.292px;">119 items</div>
<div class="sep" style="left:224.7px;top:435.3px"></div>
<div class="t" id="f127" style="left:235.6px;top:437.5px;font-size:9px;font-weight:400;color:#1a47b5;-webkit-text-stroke:0.3px #1a47b5;letter-spacing:0.242px;">No filters set</div>
<div class="t" id="f128" style="left:299.6px;top:437.5px;font-size:9px;font-weight:400;color:#a9bcec;-webkit-text-stroke:0.15px #a9bcec;letter-spacing:0.199px;">Clear all filters</div>
<div class="sep" style="left:369.5px;top:435.3px"></div>
<svg class="abs" style="left:380.3px;top:435.5px" width="14" height="13" viewBox="0 0 14 13" ><path d="M4.300 9.300H3.500C2 9.3.8 8.2.8 6.700c0-1.4 1-2.5 2.3-2.700C3.500 2.2 5 .9 6.9.9c1.800 0 3.3 1.1 3.8 2.7 1.5.2 2.6 1.4 2.6 2.9 0 1.6-1.3 2.8-2.8 2.800h-.8" fill="none" stroke="#1a47b5" stroke-width="1.25" stroke-linecap="round"/><path d="M7 5.400v6.200M4.800 9.600L7 11.800l2.200-2.2" fill="none" stroke="#1a47b5" stroke-width="1.25" stroke-linecap="round" stroke-linejoin="round"/></svg>
<div class="t" id="f129" style="left:397.6px;top:437.5px;font-size:9px;font-weight:400;color:#1a47b5;-webkit-text-stroke:0.3px #1a47b5;letter-spacing:0.071px;">Download</div>
<div class="sel" style="left:979px;top:428.7px;width:111px;height:26.5px"></div>
<div class="abs" style="left:984.8px;top:434.3px;width:23.400px;height:14.600px;background:#e3eafb;border-radius:2px"></div>
<div class="t" id="f130" style="left:992.5px;top:438px;font-size:8.3px;font-weight:700;color:#14226a;letter-spacing:-0.444px;">1h</div>
<div class="t" id="f131" style="left:1018.5px;top:437.7px;font-size:9px;font-weight:400;color:#4f566b;letter-spacing:-0.112px;">Last 1 hour</div>
<svg class="abs" style="left:1073.5px;top:439.5px" width="9" height="6" viewBox="0 0 9 6" ><path d="M1 1l3.500 3.500L8 1" fill="none" stroke="#8a93ad" stroke-width=".9"/></svg>
<div class="sel" style="left:1094px;top:428.7px;width:122px;height:26.5px;border-width:1.2px"></div>
<svg class="abs" style="left:1107px;top:436.7px" width="11" height="11" viewBox="0 0 11 11" ><circle cx="4.5" cy="4.5" r="3.5" fill="none" stroke="#5877b8" stroke-width="1"/><path d="M7 7l3.200 3.2" stroke="#5877b8" stroke-width="1"/></svg>
<div class="t" id="f132" style="left:1123.8px;top:437.5px;font-size:9.3px;font-weight:400;color:#5d6377;letter-spacing:-0.178px;font-style:italic">Search</div>
<svg class="abs" style="left:1226px;top:434.5px" width="15" height="15" viewBox="0 0 15 15" ><g fill="none" stroke="#0b1236" stroke-width="1.4"><path d="M2 6.800C2.400 4 4.7 2 7.5 2c1.900 0 3.5.9 4.5 2.300M13 8.200C12.600 11 10.3 13 7.5 13c-1.9 0-3.5-.9-4.5-2.3"/><path d="M12.500 1.200v3.400H9.100M2.500 13.800v-3.400h3.400"/></g></svg>
<svg class="abs" style="left:1251.5px;top:435.2px" width="13" height="13" viewBox="0 0 13 13" ><g fill="none" stroke="#0b1236" stroke-width="1.2"><path d="M.3 2.200h12.400M.3 6.500h12.400M.3 10.800h12.400"/><path d="M4 .4v3.600M9 4.700v3.600M3 9v3.600" stroke-width="1.7"/></g></svg>
<div class="ln" style="top:459px"></div>
<div class="ln" style="top:489px"></div>
<div class="t" id="f133" style="left:175.5px;top:470.2px;font-size:8.7px;font-weight:700;color:#0b1236;-webkit-text-stroke:0.12px #0b1236;letter-spacing:0.014px;">Pipeline name</div>
<svg class="abs" style="left:324.0px;top:470.5px" width="11" height="10" viewBox="0 0 11 10" ><path d="M.9 .9h9.200L6.600 5.200v3.700L4.400 7.700V5.200z" fill="none" stroke="#1b2342" stroke-width=".9" stroke-linejoin="round"/></svg>
<div class="sep" style="left:343.8px;top:468.2px"></div>
<div class="t" id="f134" style="left:352.3px;top:470.2px;font-size:8.7px;font-weight:700;color:#0b1236;-webkit-text-stroke:0.12px #0b1236;letter-spacing:-0.209px;">Owner</div>
<div class="sep" style="left:520.1999999999999px;top:468.2px"></div>
<div class="t" id="f135" style="left:529.2px;top:470.2px;font-size:8.7px;font-weight:700;color:#0b1236;-webkit-text-stroke:0.12px #0b1236;letter-spacing:0.015px;">Type</div>
<svg class="abs" style="left:561.6px;top:470.5px" width="11" height="10" viewBox="0 0 11 10" ><path d="M.9 .9h9.200L6.600 5.200v3.700L4.400 7.700V5.200z" fill="none" stroke="#1b2342" stroke-width=".9" stroke-linejoin="round"/></svg>
<div class="sep" style="left:581.0999999999999px;top:468.2px"></div>
<div class="t" id="f136" style="left:590px;top:470.2px;font-size:8.7px;font-weight:700;color:#0b1236;-webkit-text-stroke:0.12px #0b1236;letter-spacing:0.040px;">Status</div>
<svg class="abs" style="left:701.2px;top:470.5px" width="11" height="10" viewBox="0 0 11 10" ><path d="M.9 .9h9.200L6.600 5.200v3.700L4.400 7.700V5.200z" fill="none" stroke="#1b2342" stroke-width=".9" stroke-linejoin="round"/></svg>
<div class="sep" style="left:721.0px;top:468.2px"></div>
<div class="t" id="f137" style="left:730px;top:470.2px;font-size:8.7px;font-weight:700;color:#0b1236;-webkit-text-stroke:0.12px #0b1236;letter-spacing:-0.044px;">Invoker</div>
<div class="sep" style="left:812.5px;top:468.2px"></div>
<div class="t" id="f138" style="left:821.5px;top:470.2px;font-size:8.7px;font-weight:700;color:#0b1236;-webkit-text-stroke:0.12px #0b1236;letter-spacing:-0.085px;">Task name</div>
<svg class="abs" style="left:969.4px;top:470.5px" width="11" height="10" viewBox="0 0 11 10" ><path d="M.9 .9h9.200L6.600 5.200v3.700L4.400 7.700V5.200z" fill="none" stroke="#1b2342" stroke-width=".9" stroke-linejoin="round"/></svg>
<div class="sep" style="left:989.4px;top:468.2px"></div>
<div class="t" id="f139" style="left:997.8px;top:470.2px;font-size:8.7px;font-weight:700;color:#0b1236;-webkit-text-stroke:0.12px #0b1236;letter-spacing:0.092px;">Project</div>
<svg class="abs" style="left:1061.5px;top:470.5px" width="11" height="10" viewBox="0 0 11 10" ><path d="M.9 .9h9.200L6.600 5.200v3.700L4.400 7.700V5.200z" fill="none" stroke="#1b2342" stroke-width=".9" stroke-linejoin="round"/></svg>
<div class="sep" style="left:1080.7px;top:468.2px"></div>
<div class="t" id="f140" style="left:1089.7px;top:470.2px;font-size:8.7px;font-weight:700;color:#0b1236;-webkit-text-stroke:0.12px #0b1236;letter-spacing:-0.243px;">RUUID</div>
<div class="sep" style="left:1172.3px;top:468.2px"></div>
<div class="t" id="f141" style="left:1180.7px;top:470.2px;font-size:8.7px;font-weight:700;color:#0b1236;-webkit-text-stroke:0.12px #0b1236;letter-spacing:0.171px;">Snaplex/Node</div>
<svg class="abs" style="left:239.5px;top:471.5px" width="6" height="7" viewBox="0 0 6 7" ><path d="M3 6.300V1M1.200 2.700L3 .9l1.800 1.8" fill="none" stroke="#8ea7e6" stroke-width="1"/></svg>
<svg class="abs" style="left:383.5px;top:471.5px" width="6" height="7" viewBox="0 0 6 7" ><path d="M3 6.300V1M1.200 2.700L3 .9l1.800 1.8" fill="none" stroke="#8ea7e6" stroke-width="1"/></svg>
<svg class="abs" style="left:622px;top:471.5px" width="6" height="7" viewBox="0 0 6 7" ><path d="M3 6.300V1M1.200 2.700L3 .9l1.800 1.8" fill="none" stroke="#8ea7e6" stroke-width="1"/></svg>
<svg class="abs" style="left:178.8px;top:493.2px" width="5.2" height="7.6" viewBox="0 0 5.2 7.6" ><path d="M.7 .7L4.2 3.8 .7 6.9" fill="none" stroke="#0b1236" stroke-width="1.15"/></svg>
<div class="t" id="f142" style="left:192.3px;top:493.3px;font-size:9.1px;font-weight:400;color:#1a47b5;-webkit-text-stroke:0.22px #1a47b5;letter-spacing:0.070px;">ExpressionPipeline</div>
<div class="t" id="f143" style="left:352.3px;top:493.3px;font-size:9.1px;font-weight:400;color:#0b1236;-webkit-text-stroke:0.22px #0b1236;letter-spacing:0.132px;">jdoe@myexample.com</div>
<div class="t" id="f144" style="left:529px;top:493.3px;font-size:9.1px;font-weight:400;color:#1a47b5;-webkit-text-stroke:0.22px #1a47b5;letter-spacing:-0.101px;">API Calls</div>
<div class="t" id="f145" style="left:590px;top:493.3px;font-size:9.1px;font-weight:400;color:#0b1236;-webkit-text-stroke:0.22px #0b1236;letter-spacing:0.240px;">Completed with errors</div>
<div class="t" id="f146" style="left:730px;top:493.3px;font-size:9.1px;font-weight:400;color:#0b1236;-webkit-text-stroke:0.22px #0b1236;letter-spacing:0.114px;">bearer token/...</div>
<div class="t" id="f147" style="left:821.5px;top:493.3px;font-size:9.1px;font-weight:400;color:#1a47b5;-webkit-text-stroke:0.22px #1a47b5;letter-spacing:0.132px;">ExpressionPipeline_tlsfmTask</div>
<div class="t" id="f148" style="left:1003.5px;top:495.5px;font-size:9.1px;font-weight:400;color:#1a47b5;-webkit-text-stroke:0.22px #1a47b5;letter-spacing:0.270px;">projects/SW</div>
<div class="t" id="f149" style="left:1089.5px;top:493.3px;font-size:9.1px;font-weight:400;color:#0b1236;-webkit-text-stroke:0.22px #0b1236;letter-spacing:-0.185px;">5806521b242e...</div>
<div class="t" id="f150" style="left:1181px;top:493.3px;font-size:9.1px;font-weight:400;color:#0b1236;-webkit-text-stroke:0.22px #0b1236;letter-spacing:0.121px;">Cloud/na06sl-jc</div>
<svg class="abs" style="left:1257.8px;top:493.5px" width="3" height="9" viewBox="0 0 3 9" ><g fill="#3a4160"><circle cx="1.5" cy="1" r=".8"/><circle cx="1.5" cy="3.7" r=".8"/><circle cx="1.5" cy="6.4" r=".8"/></g></svg>
<div class="ln" style="top:504.56px"></div>
<svg class="abs" style="left:178.8px;top:508.56px" width="5.2" height="7.6" viewBox="0 0 5.2 7.6" ><path d="M.7 .7L4.2 3.8 .7 6.9" fill="none" stroke="#0b1236" stroke-width="1.15"/></svg>
<div class="t" id="f151" style="left:192.3px;top:508.66px;font-size:9.1px;font-weight:400;color:#1a47b5;-webkit-text-stroke:0.22px #1a47b5;letter-spacing:0.070px;">ExpressionPipeline</div>
<div class="t" id="f152" style="left:352.3px;top:508.66px;font-size:9.1px;font-weight:400;color:#0b1236;-webkit-text-stroke:0.22px #0b1236;letter-spacing:0.132px;">jdoe@myexample.com</div>
<div class="t" id="f153" style="left:529px;top:508.66px;font-size:9.1px;font-weight:400;color:#1a47b5;-webkit-text-stroke:0.22px #1a47b5;letter-spacing:-0.101px;">API Calls</div>
<div class="t" id="f154" style="left:590px;top:508.66px;font-size:9.1px;font-weight:400;color:#0b1236;-webkit-text-stroke:0.22px #0b1236;letter-spacing:0.240px;">Completed with errors</div>
<div class="t" id="f155" style="left:730px;top:508.66px;font-size:9.1px;font-weight:400;color:#0b1236;-webkit-text-stroke:0.22px #0b1236;letter-spacing:0.114px;">bearer token/...</div>
<div class="t" id="f156" style="left:821.5px;top:508.66px;font-size:9.1px;font-weight:400;color:#1a47b5;-webkit-text-stroke:0.22px #1a47b5;letter-spacing:0.132px;">ExpressionPipeline_tlsfmTask</div>
<div class="t" id="f157" style="left:1004px;top:511.16px;font-size:9.1px;font-weight:400;color:#1a47b5;-webkit-text-stroke:0.22px #1a47b5;letter-spacing:0.270px;">projects/SW</div>
<div class="t" id="f158" style="left:1089.5px;top:508.66px;font-size:9.1px;font-weight:400;color:#0b1236;-webkit-text-stroke:0.22px #0b1236;letter-spacing:-0.185px;">5806521b242e...</div>
<div class="t" id="f159" style="left:1181px;top:508.66px;font-size:9.1px;font-weight:400;color:#0b1236;-webkit-text-stroke:0.22px #0b1236;letter-spacing:0.121px;">Cloud/na06sl-jc</div>
<svg class="abs" style="left:1257.8px;top:508.86px" width="3" height="9" viewBox="0 0 3 9" ><g fill="#3a4160"><circle cx="1.5" cy="1" r=".8"/><circle cx="1.5" cy="3.7" r=".8"/><circle cx="1.5" cy="6.4" r=".8"/></g></svg>
<div class="ln" style="top:519.92px"></div>
<svg class="abs" style="left:178.8px;top:523.92px" width="5.2" height="7.6" viewBox="0 0 5.2 7.6" ><path d="M.7 .7L4.2 3.8 .7 6.9" fill="none" stroke="#0b1236" stroke-width="1.15"/></svg>
<div class="t" id="f160" style="left:192.3px;top:524.02px;font-size:9.1px;font-weight:400;color:#1a47b5;-webkit-text-stroke:0.22px #1a47b5;letter-spacing:0.070px;">ExpressionPipeline</div>
<div class="t" id="f161" style="left:352.3px;top:524.02px;font-size:9.1px;font-weight:400;color:#0b1236;-webkit-text-stroke:0.22px #0b1236;letter-spacing:0.132px;">jdoe@myexample.com</div>
<div class="t" id="f162" style="left:529px;top:524.02px;font-size:9.1px;font-weight:400;color:#1a47b5;-webkit-text-stroke:0.22px #1a47b5;letter-spacing:-0.101px;">API Calls</div>
<div class="t" id="f163" style="left:590px;top:524.02px;font-size:9.1px;font-weight:400;color:#0b1236;-webkit-text-stroke:0.22px #0b1236;letter-spacing:0.240px;">Completed with errors</div>
<div class="t" id="f164" style="left:730px;top:524.02px;font-size:9.1px;font-weight:400;color:#0b1236;-webkit-text-stroke:0.22px #0b1236;letter-spacing:0.114px;">bearer token/...</div>
<div class="t" id="f165" style="left:821.5px;top:524.02px;font-size:9.1px;font-weight:400;color:#1a47b5;-webkit-text-stroke:0.22px #1a47b5;letter-spacing:0.132px;">ExpressionPipeline_tlsfmTask</div>
<div class="t" id="f166" style="left:1004px;top:526.72px;font-size:9.1px;font-weight:400;color:#1a47b5;-webkit-text-stroke:0.22px #1a47b5;letter-spacing:0.270px;">projects/SW</div>
<div class="t" id="f167" style="left:1089.5px;top:524.02px;font-size:9.1px;font-weight:400;color:#0b1236;-webkit-text-stroke:0.22px #0b1236;letter-spacing:-0.185px;">5806521b242e...</div>
<div class="t" id="f168" style="left:1181px;top:524.02px;font-size:9.1px;font-weight:400;color:#0b1236;-webkit-text-stroke:0.22px #0b1236;letter-spacing:0.121px;">Cloud/na06sl-jc</div>
<svg class="abs" style="left:1257.8px;top:524.22px" width="3" height="9" viewBox="0 0 3 9" ><g fill="#3a4160"><circle cx="1.5" cy="1" r=".8"/><circle cx="1.5" cy="3.7" r=".8"/><circle cx="1.5" cy="6.4" r=".8"/></g></svg>
<div class="ln" style="top:535.28px"></div>
<svg class="abs" style="left:178.8px;top:539.28px" width="5.2" height="7.6" viewBox="0 0 5.2 7.6" ><path d="M.7 .7L4.2 3.8 .7 6.9" fill="none" stroke="#0b1236" stroke-width="1.15"/></svg>
<div class="t" id="f169" style="left:192.3px;top:539.38px;font-size:9.1px;font-weight:400;color:#1a47b5;-webkit-text-stroke:0.22px #1a47b5;letter-spacing:0.070px;">ExpressionPipeline</div>
<div class="t" id="f170" style="left:352.3px;top:539.38px;font-size:9.1px;font-weight:400;color:#0b1236;-webkit-text-stroke:0.22px #0b1236;letter-spacing:0.132px;">jdoe@myexample.com</div>
<div class="t" id="f171" style="left:529px;top:539.38px;font-size:9.1px;font-weight:400;color:#1a47b5;-webkit-text-stroke:0.22px #1a47b5;letter-spacing:-0.101px;">API Calls</div>
<div class="t" id="f172" style="left:590px;top:539.38px;font-size:9.1px;font-weight:400;color:#0b1236;-webkit-text-stroke:0.22px #0b1236;letter-spacing:0.240px;">Completed with errors</div>
<div class="t" id="f173" style="left:730px;top:539.38px;font-size:9.1px;font-weight:400;color:#0b1236;-webkit-text-stroke:0.22px #0b1236;letter-spacing:0.114px;">bearer token/...</div>
<div class="t" id="f174" style="left:821.5px;top:539.38px;font-size:9.1px;font-weight:400;color:#1a47b5;-webkit-text-stroke:0.22px #1a47b5;letter-spacing:0.132px;">ExpressionPipeline_tlsfmTask</div>
<div class="t" id="f175" style="left:1003.5px;top:542.18px;font-size:9.1px;font-weight:400;color:#1a47b5;-webkit-text-stroke:0.22px #1a47b5;letter-spacing:0.270px;">projects/SW</div>
<div class="t" id="f176" style="left:1089.5px;top:539.38px;font-size:9.1px;font-weight:400;color:#0b1236;-webkit-text-stroke:0.22px #0b1236;letter-spacing:-0.185px;">5806521b242e...</div>
<div class="t" id="f177" style="left:1181px;top:539.38px;font-size:9.1px;font-weight:400;color:#0b1236;-webkit-text-stroke:0.22px #0b1236;letter-spacing:0.121px;">Cloud/na06sl-jc</div>
<svg class="abs" style="left:1257.8px;top:539.58px" width="3" height="9" viewBox="0 0 3 9" ><g fill="#3a4160"><circle cx="1.5" cy="1" r=".8"/><circle cx="1.5" cy="3.7" r=".8"/><circle cx="1.5" cy="6.4" r=".8"/></g></svg>
<div class="ln" style="top:550.64px"></div>
<svg class="abs" style="left:178.8px;top:554.64px" width="5.2" height="7.6" viewBox="0 0 5.2 7.6" ><path d="M.7 .7L4.2 3.8 .7 6.9" fill="none" stroke="#0b1236" stroke-width="1.15"/></svg>
<div class="t" id="f178" style="left:192.3px;top:554.74px;font-size:9.1px;font-weight:400;color:#1a47b5;-webkit-text-stroke:0.22px #1a47b5;letter-spacing:0.070px;">ExpressionPipeline</div>
<div class="t" id="f179" style="left:352.3px;top:554.74px;font-size:9.1px;font-weight:400;color:#0b1236;-webkit-text-stroke:0.22px #0b1236;letter-spacing:0.132px;">jdoe@myexample.com</div>
<div class="t" id="f180" style="left:529px;top:554.74px;font-size:9.1px;font-weight:400;color:#1a47b5;-webkit-text-stroke:0.22px #1a47b5;letter-spacing:-0.101px;">API Calls</div>
<div class="t" id="f181" style="left:590px;top:554.74px;font-size:9.1px;font-weight:400;color:#0b1236;-webkit-text-stroke:0.22px #0b1236;letter-spacing:0.240px;">Completed with errors</div>
<div class="t" id="f182" style="left:730px;top:554.74px;font-size:9.1px;font-weight:400;color:#0b1236;-webkit-text-stroke:0.22px #0b1236;letter-spacing:0.114px;">bearer token/...</div>
<div class="t" id="f183" style="left:821.5px;top:554.74px;font-size:9.1px;font-weight:400;color:#1a47b5;-webkit-text-stroke:0.22px #1a47b5;letter-spacing:0.132px;">ExpressionPipeline_tlsfmTask</div>
<div class="t" id="f184" style="left:1004.5px;top:556.94px;font-size:9.1px;font-weight:400;color:#1a47b5;-webkit-text-stroke:0.22px #1a47b5;letter-spacing:0.270px;">projects/SW</div>
<div class="t" id="f185" style="left:1089.5px;top:554.74px;font-size:9.1px;font-weight:400;color:#0b1236;-webkit-text-stroke:0.22px #0b1236;letter-spacing:-0.185px;">5806521b242e...</div>
<div class="t" id="f186" style="left:1181px;top:554.74px;font-size:9.1px;font-weight:400;color:#0b1236;-webkit-text-stroke:0.22px #0b1236;letter-spacing:0.121px;">Cloud/na06sl-jc</div>
<svg class="abs" style="left:1257.8px;top:554.94px" width="3" height="9" viewBox="0 0 3 9" ><g fill="#3a4160"><circle cx="1.5" cy="1" r=".8"/><circle cx="1.5" cy="3.7" r=".8"/><circle cx="1.5" cy="6.4" r=".8"/></g></svg>
<div class="ln" style="top:566.00px"></div>
<svg class="abs" style="left:178.8px;top:570.0px" width="5.2" height="7.6" viewBox="0 0 5.2 7.6" ><path d="M.7 .7L4.2 3.8 .7 6.9" fill="none" stroke="#0b1236" stroke-width="1.15"/></svg>
<div class="t" id="f187" style="left:192.3px;top:570.1px;font-size:9.1px;font-weight:400;color:#1a47b5;-webkit-text-stroke:0.22px #1a47b5;letter-spacing:0.070px;">ExpressionPipeline</div>
<div class="t" id="f188" style="left:352.3px;top:570.1px;font-size:9.1px;font-weight:400;color:#0b1236;-webkit-text-stroke:0.22px #0b1236;letter-spacing:0.132px;">jdoe@myexample.com</div>
<div class="t" id="f189" style="left:529px;top:570.1px;font-size:9.1px;font-weight:400;color:#1a47b5;-webkit-text-stroke:0.22px #1a47b5;letter-spacing:-0.101px;">API Calls</div>
<div class="t" id="f190" style="left:590px;top:570.1px;font-size:9.1px;font-weight:400;color:#0b1236;-webkit-text-stroke:0.22px #0b1236;letter-spacing:0.240px;">Completed with errors</div>
<div class="t" id="f191" style="left:730px;top:570.1px;font-size:9.1px;font-weight:400;color:#0b1236;-webkit-text-stroke:0.22px #0b1236;letter-spacing:0.114px;">bearer token/...</div>
<div class="t" id="f192" style="left:821.5px;top:570.1px;font-size:9.1px;font-weight:400;color:#1a47b5;-webkit-text-stroke:0.22px #1a47b5;letter-spacing:0.132px;">ExpressionPipeline_tlsfmTask</div>
<div class="t" id="f193" style="left:1005px;top:572.6px;font-size:9.1px;font-weight:400;color:#1a47b5;-webkit-text-stroke:0.22px #1a47b5;letter-spacing:0.270px;">projects/SW</div>
<div class="t" id="f194" style="left:1089.5px;top:570.1px;font-size:9.1px;font-weight:400;color:#0b1236;-webkit-text-stroke:0.22px #0b1236;letter-spacing:-0.185px;">5806521b242e...</div>
<div class="t" id="f195" style="left:1181px;top:570.1px;font-size:9.1px;font-weight:400;color:#0b1236;-webkit-text-stroke:0.22px #0b1236;letter-spacing:0.121px;">Cloud/na06sl-jc</div>
<svg class="abs" style="left:1257.8px;top:570.3px" width="3" height="9" viewBox="0 0 3 9" ><g fill="#3a4160"><circle cx="1.5" cy="1" r=".8"/><circle cx="1.5" cy="3.7" r=".8"/><circle cx="1.5" cy="6.4" r=".8"/></g></svg>
<div class="ln" style="top:581.36px"></div>
<svg class="abs" style="left:178.8px;top:585.36px" width="5.2" height="7.6" viewBox="0 0 5.2 7.6" ><path d="M.7 .7L4.2 3.8 .7 6.9" fill="none" stroke="#0b1236" stroke-width="1.15"/></svg>
<div class="t" id="f196" style="left:192.3px;top:585.46px;font-size:9.1px;font-weight:400;color:#1a47b5;-webkit-text-stroke:0.22px #1a47b5;letter-spacing:0.070px;">ExpressionPipeline</div>
<div class="t" id="f197" style="left:352.3px;top:585.46px;font-size:9.1px;font-weight:400;color:#0b1236;-webkit-text-stroke:0.22px #0b1236;letter-spacing:0.132px;">jdoe@myexample.com</div>
<div class="t" id="f198" style="left:529px;top:585.46px;font-size:9.1px;font-weight:400;color:#1a47b5;-webkit-text-stroke:0.22px #1a47b5;letter-spacing:-0.101px;">API Calls</div>
<div class="t" id="f199" style="left:590px;top:585.46px;font-size:9.1px;font-weight:400;color:#0b1236;-webkit-text-stroke:0.22px #0b1236;letter-spacing:0.240px;">Completed with errors</div>
<div class="t" id="f200" style="left:730px;top:585.46px;font-size:9.1px;font-weight:400;color:#0b1236;-webkit-text-stroke:0.22px #0b1236;letter-spacing:0.114px;">bearer token/...</div>
<div class="t" id="f201" style="left:821.5px;top:585.46px;font-size:9.1px;font-weight:400;color:#1a47b5;-webkit-text-stroke:0.22px #1a47b5;letter-spacing:0.132px;">ExpressionPipeline_tlsfmTask</div>
<div class="t" id="f202" style="left:1006.5px;top:588.46px;font-size:9.1px;font-weight:400;color:#1a47b5;-webkit-text-stroke:0.22px #1a47b5;letter-spacing:0.270px;">projects/SW</div>
<div class="t" id="f203" style="left:1089.5px;top:585.46px;font-size:9.1px;font-weight:400;color:#0b1236;-webkit-text-stroke:0.22px #0b1236;letter-spacing:-0.185px;">5806521b242e...</div>
<div class="t" id="f204" style="left:1181px;top:585.46px;font-size:9.1px;font-weight:400;color:#0b1236;-webkit-text-stroke:0.22px #0b1236;letter-spacing:0.121px;">Cloud/na06sl-jc</div>
<svg class="abs" style="left:1257.8px;top:585.66px" width="3" height="9" viewBox="0 0 3 9" ><g fill="#3a4160"><circle cx="1.5" cy="1" r=".8"/><circle cx="1.5" cy="3.7" r=".8"/><circle cx="1.5" cy="6.4" r=".8"/></g></svg>
<div class="ln" style="top:596.72px"></div>
<svg class="abs" style="left:178.8px;top:600.72px" width="5.2" height="7.6" viewBox="0 0 5.2 7.6" ><path d="M.7 .7L4.2 3.8 .7 6.9" fill="none" stroke="#0b1236" stroke-width="1.15"/></svg>
<div class="t" id="f205" style="left:192.3px;top:600.82px;font-size:9.1px;font-weight:400;color:#1a47b5;-webkit-text-stroke:0.22px #1a47b5;letter-spacing:0.070px;">ExpressionPipeline</div>
<div class="t" id="f206" style="left:352.3px;top:600.82px;font-size:9.1px;font-weight:400;color:#0b1236;-webkit-text-stroke:0.22px #0b1236;letter-spacing:0.132px;">jdoe@myexample.com</div>
<div class="t" id="f207" style="left:529px;top:600.82px;font-size:9.1px;font-weight:400;color:#1a47b5;-webkit-text-stroke:0.22px #1a47b5;letter-spacing:-0.101px;">API Calls</div>
<div class="t" id="f208" style="left:590px;top:600.82px;font-size:9.1px;font-weight:400;color:#0b1236;-webkit-text-stroke:0.22px #0b1236;letter-spacing:0.240px;">Completed with errors</div>
<div class="t" id="f209" style="left:730px;top:600.82px;font-size:9.1px;font-weight:400;color:#0b1236;-webkit-text-stroke:0.22px #0b1236;letter-spacing:0.114px;">bearer token/...</div>
<div class="t" id="f210" style="left:821.5px;top:600.82px;font-size:9.1px;font-weight:400;color:#1a47b5;-webkit-text-stroke:0.22px #1a47b5;letter-spacing:0.132px;">ExpressionPipeline_tlsfmTask</div>
<div class="t" id="f211" style="left:1005.5px;top:603.62px;font-size:9.1px;font-weight:400;color:#1a47b5;-webkit-text-stroke:0.22px #1a47b5;letter-spacing:0.270px;">projects/SW</div>
<div class="t" id="f212" style="left:1089.5px;top:600.82px;font-size:9.1px;font-weight:400;color:#0b1236;-webkit-text-stroke:0.22px #0b1236;letter-spacing:-0.185px;">5806521b242e...</div>
<div class="t" id="f213" style="left:1181px;top:600.82px;font-size:9.1px;font-weight:400;color:#0b1236;-webkit-text-stroke:0.22px #0b1236;letter-spacing:0.121px;">Cloud/na06sl-jc</div>
<svg class="abs" style="left:1257.8px;top:601.02px" width="3" height="9" viewBox="0 0 3 9" ><g fill="#3a4160"><circle cx="1.5" cy="1" r=".8"/><circle cx="1.5" cy="3.7" r=".8"/><circle cx="1.5" cy="6.4" r=".8"/></g></svg>
<div class="ln" style="top:612.08px"></div>
<svg class="abs" style="left:178.8px;top:616.08px" width="5.2" height="7.6" viewBox="0 0 5.2 7.6" ><path d="M.7 .7L4.2 3.8 .7 6.9" fill="none" stroke="#0b1236" stroke-width="1.15"/></svg>
<div class="t" id="f214" style="left:192.3px;top:616.18px;font-size:9.1px;font-weight:400;color:#1a47b5;-webkit-text-stroke:0.22px #1a47b5;letter-spacing:0.070px;">ExpressionPipeline</div>
<div class="t" id="f215" style="left:352.3px;top:616.18px;font-size:9.1px;font-weight:400;color:#0b1236;-webkit-text-stroke:0.22px #0b1236;letter-spacing:0.132px;">jdoe@myexample.com</div>
<div class="t" id="f216" style="left:529px;top:616.18px;font-size:9.1px;font-weight:400;color:#1a47b5;-webkit-text-stroke:0.22px #1a47b5;letter-spacing:-0.101px;">API Calls</div>
<div class="t" id="f217" style="left:590px;top:616.18px;font-size:9.1px;font-weight:400;color:#0b1236;-webkit-text-stroke:0.22px #0b1236;letter-spacing:0.240px;">Completed with errors</div>
<div class="t" id="f218" style="left:730px;top:616.18px;font-size:9.1px;font-weight:400;color:#0b1236;-webkit-text-stroke:0.22px #0b1236;letter-spacing:0.114px;">bearer token/...</div>
<div class="t" id="f219" style="left:821.5px;top:616.18px;font-size:9.1px;font-weight:400;color:#1a47b5;-webkit-text-stroke:0.22px #1a47b5;letter-spacing:0.132px;">ExpressionPipeline_tlsfmTask</div>
<div class="t" id="f220" style="left:1006px;top:618.78px;font-size:9.1px;font-weight:400;color:#1a47b5;-webkit-text-stroke:0.22px #1a47b5;letter-spacing:0.270px;">projects/SW</div>
<div class="t" id="f221" style="left:1089.5px;top:616.18px;font-size:9.1px;font-weight:400;color:#0b1236;-webkit-text-stroke:0.22px #0b1236;letter-spacing:-0.185px;">5806521b242e...</div>
<div class="t" id="f222" style="left:1181px;top:616.18px;font-size:9.1px;font-weight:400;color:#0b1236;-webkit-text-stroke:0.22px #0b1236;letter-spacing:0.121px;">Cloud/na06sl-jc</div>
<svg class="abs" style="left:1257.8px;top:616.38px" width="3" height="9" viewBox="0 0 3 9" ><g fill="#3a4160"><circle cx="1.5" cy="1" r=".8"/><circle cx="1.5" cy="3.7" r=".8"/><circle cx="1.5" cy="6.4" r=".8"/></g></svg>
<div class="ln" style="top:627.44px"></div>
<svg class="abs" style="left:178.8px;top:631.44px" width="5.2" height="7.6" viewBox="0 0 5.2 7.6" ><path d="M.7 .7L4.2 3.8 .7 6.9" fill="none" stroke="#0b1236" stroke-width="1.15"/></svg>
<div class="t" id="f223" style="left:192.3px;top:631.54px;font-size:9.1px;font-weight:400;color:#1a47b5;-webkit-text-stroke:0.22px #1a47b5;letter-spacing:0.070px;">ExpressionPipeline</div>
<div class="t" id="f224" style="left:352.3px;top:631.54px;font-size:9.1px;font-weight:400;color:#0b1236;-webkit-text-stroke:0.22px #0b1236;letter-spacing:0.132px;">jdoe@myexample.com</div>
<div class="t" id="f225" style="left:529px;top:631.54px;font-size:9.1px;font-weight:400;color:#1a47b5;-webkit-text-stroke:0.22px #1a47b5;letter-spacing:-0.101px;">API Calls</div>
<div class="t" id="f226" style="left:590px;top:631.54px;font-size:9.1px;font-weight:400;color:#0b1236;-webkit-text-stroke:0.22px #0b1236;letter-spacing:0.240px;">Completed with errors</div>
<div class="t" id="f227" style="left:730px;top:631.54px;font-size:9.1px;font-weight:400;color:#0b1236;-webkit-text-stroke:0.22px #0b1236;letter-spacing:0.114px;">bearer token/...</div>
<div class="t" id="f228" style="left:821.5px;top:631.54px;font-size:9.1px;font-weight:400;color:#1a47b5;-webkit-text-stroke:0.22px #1a47b5;letter-spacing:0.132px;">ExpressionPipeline_tlsfmTask</div>
<div class="t" id="f229" style="left:1089.5px;top:631.54px;font-size:9.1px;font-weight:400;color:#0b1236;-webkit-text-stroke:0.22px #0b1236;letter-spacing:-0.185px;">5806521b242e...</div>
<div class="t" id="f230" style="left:1181px;top:631.54px;font-size:9.1px;font-weight:400;color:#0b1236;-webkit-text-stroke:0.22px #0b1236;letter-spacing:0.121px;">Cloud/na06sl-jc</div>
<svg class="abs" style="left:1257.8px;top:631.74px" width="3" height="9" viewBox="0 0 3 9" ><g fill="#3a4160"><circle cx="1.5" cy="1" r=".8"/><circle cx="1.5" cy="3.7" r=".8"/><circle cx="1.5" cy="6.4" r=".8"/></g></svg>
<div class="ln" style="top:642.80px"></div>
<div class="abs" style="left:180px;top:646.70px;width:721px;height:6px;border-radius:3px;background:#8a8a8a"></div>
<svg class="abs" style="left:170.3px;top:646.2px" width="5.5" height="7" viewBox="0 0 5.5 7" ><path d="M5.300 .2v6.600L.2 3.500z" fill="#707070"/></svg>
<svg class="abs" style="left:1266.8px;top:646.2px" width="5.5" height="7" viewBox="0 0 5.5 7" ><path d="M.2 .2v6.600L5.300 3.500z" fill="#9a9a9a"/></svg>
<div class="t" id="f231" style="left:172.4px;top:664.6px;font-size:9px;font-weight:400;color:#0b1236;-webkit-text-stroke:0.2px #0b1236;letter-spacing:0.037px;">Last updated Jan 08, 2026 09:18:50 PM</div>
<svg class="abs" style="left:637.5px;top:664.3000000000001px" width="5.5" height="8.5" viewBox="0 0 5.5 8.5" ><path d="M4.5 .7L.7 4.25 4.5 7.8" fill="none" stroke="#c4c9d6" stroke-width="1"/></svg>
<div class="t" id="f232" style="left:661.5px;top:664.6px;font-size:9px;font-weight:400;color:#0b1236;-webkit-text-stroke:0.2px #0b1236;letter-spacing:0.041px;">Go to page:</div>
<div class="sel" style="left:714.5px;top:659.6px;width:42px;height:19px"></div>
<div class="t" style="left:724.0px;top:664.6px;font-size:9px;font-weight:400;color:#0b1236;-webkit-text-stroke:0.2px #0b1236;">1</div>
<svg class="abs" style="left:737.5px;top:666.9px" width="8" height="5" viewBox="0 0 8 5" ><path d="M1 1l3 3L7 1" fill="none" stroke="#a0a7bb" stroke-width=".9"/></svg>
<div class="t" id="f233" style="left:762px;top:664.6px;font-size:9px;font-weight:400;color:#0b1236;-webkit-text-stroke:0.2px #0b1236;letter-spacing:-0.006px;">of 12</div>
<svg class="abs" style="left:799.5px;top:664.3000000000001px" width="5.5" height="8.5" viewBox="0 0 5.5 8.5" ><path d="M.7 .7L4.5 4.25 .7 7.8" fill="none" stroke="#0b1236" stroke-width="1.4"/></svg>
<div class="sel" style="left:1155.5px;top:659.6px;width:48px;height:19px"></div>
<div class="t" style="left:1164.5px;top:664.6px;font-size:9px;font-weight:400;color:#0b1236;-webkit-text-stroke:0.2px #0b1236;">10</div>
<svg class="abs" style="left:1184.5px;top:666.9px" width="8" height="5" viewBox="0 0 8 5" ><path d="M1 1l3 3L7 1" fill="none" stroke="#a0a7bb" stroke-width=".9"/></svg>
<div class="t" id="f234" style="left:1209.8px;top:664.6px;font-size:9px;font-weight:400;color:#0b1236;-webkit-text-stroke:0.2px #0b1236;letter-spacing:0.035px;">Rows per page</div>
<div class="abs" style="left:1290px;top:107px;width:10px;height:574px;background:#fbfbfb"></div>
<div class="abs" style="left:1292px;top:119.200px;width:6px;height:549.300px;border-radius:3px;background:linear-gradient(180deg,#8b8b8b 0,#8b8b8b 219px,#5c5c5c 219.100px)"></div>
<svg class="abs" style="left:1291.8px;top:110.5px" width="6.4" height="4.7" viewBox="0 0 6.4 4.7" ><path d="M.2 4.500h6L3.200 .3z" fill="#8a8a8a"/></svg>
<svg class="abs" style="left:1291.8px;top:673.5px" width="6.4" height="4.7" viewBox="0 0 6.4 4.7" ><path d="M.2 .2h6L3.200 4.400z" fill="#8a8a8a"/></svg>
</body></html>
